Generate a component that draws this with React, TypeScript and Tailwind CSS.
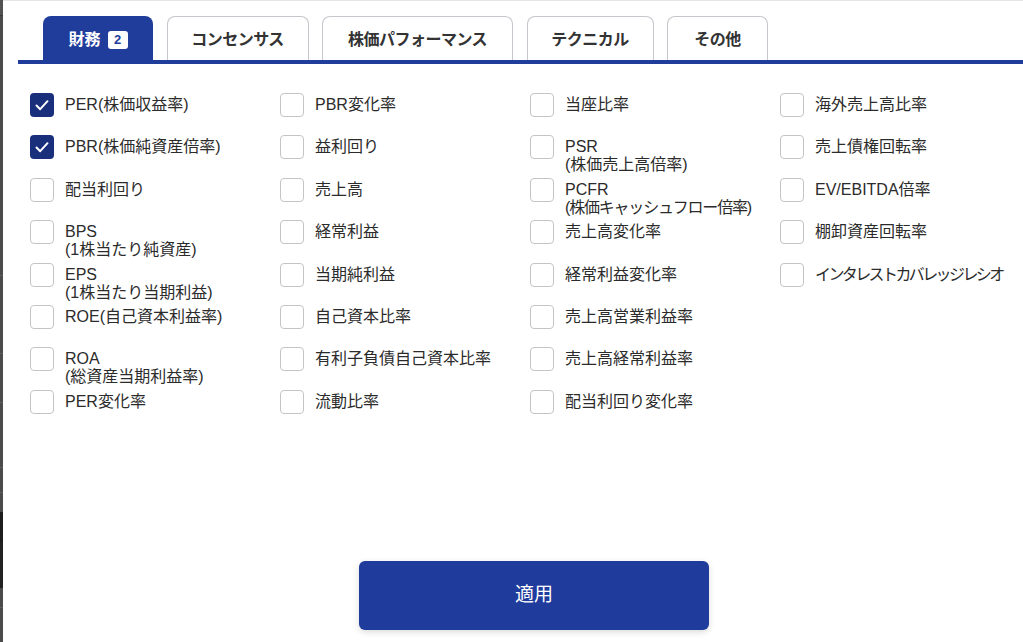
import React from "react";

const FONT = { fontFamily: '"Liberation Sans", "Noto Sans CJK JP", sans-serif' };

type Item = { label: string; sub?: string; checked?: boolean; lt?: string; st?: string };

const columns: Item[][] = [
  [
    { label: "PER(株価収益率)", checked: true },
    { label: "PBR(株価純資産倍率)", checked: true },
    { label: "配当利回り" },
    { label: "BPS", sub: "(1株当たり純資産)" },
    { label: "EPS", sub: "(1株当たり当期利益)" },
    { label: "ROE(自己資本利益率)" },
    { label: "ROA", sub: "(総資産当期利益率)" },
    { label: "PER変化率" },
  ],
  [
    { label: "PBR変化率" },
    { label: "益利回り" },
    { label: "売上高" },
    { label: "経常利益" },
    { label: "当期純利益" },
    { label: "自己資本比率" },
    { label: "有利子負債自己資本比率" },
    { label: "流動比率" },
  ],
  [
    { label: "当座比率" },
    { label: "PSR", sub: "(株価売上高倍率)" },
    { label: "PCFR", sub: "(株価キャッシュフロー倍率)", st: "tracking-[-1.2px]" },
    { label: "売上高変化率" },
    { label: "経常利益変化率" },
    { label: "売上高営業利益率" },
    { label: "売上高経常利益率" },
    { label: "配当利回り変化率" },
  ],
  [
    { label: "海外売上高比率" },
    { label: "売上債権回転率" },
    { label: "EV/EBITDA倍率" },
    { label: "棚卸資産回転率" },
    { label: "インタレストカバレッジレシオ", lt: "tracking-[-2.6px]" },
  ],
];

function Check({ checked }: { checked?: boolean }) {
  if (checked) {
    return (
      <div className="w-[24px] h-[24px] shrink-0 rounded-[4px] bg-[#1a2f7c] flex items-center justify-center">
        <svg width="24" height="24" viewBox="0 0 24 24">
          <polyline points="6.5,12.5 10.2,16.2 17.5,8.2" fill="none" stroke="#fff" strokeWidth="2" strokeLinecap="round" strokeLinejoin="round" />
        </svg>
      </div>
    );
  }
  return <div className="w-[24px] h-[24px] shrink-0 rounded-[4px] border border-[#c4c4c8] bg-white" />;
}

function Tab({ w, children, active }: { w: string; children: React.ReactNode; active?: boolean }) {
  return (
    <div
      className={
        active
          ? `${w} shrink-0 h-[44px] rounded-t-[8px] bg-[#203d9b] text-white flex items-center justify-center pt-[3px] text-[16px] font-bold`
          : `${w} shrink-0 h-[44px] rounded-t-[8px] border border-b-0 border-[#c6c6cc] bg-white text-[#333] flex items-center justify-center pt-[3px] text-[16px] font-bold tracking-[-0.5px]`
      }
    >
      {children}
    </div>
  );
}

export default function App() {
  return (
    <div className="w-[1023px] h-[642px] flex bg-white overflow-hidden" style={FONT}>
      <div className="w-[3px] shrink-0 h-full flex flex-col bg-[#4b4b4b]">
        <div className="h-[15px] bg-[#525252]" />
        <div className="h-[1px] bg-[#3a3a3a]" />
        <div className="h-[259px]" />
        <div className="h-[1px] bg-[#5e5e5e]" />
        <div className="h-[77px]" />
        <div className="h-[1px] bg-[#5e5e5e]" />
        <div className="h-[48px]" />
        <div className="h-[1px] bg-[#5e5e5e]" />
        <div className="h-[64px]" />
        <div className="h-[1px] bg-[#5e5e5e]" />
        <div className="h-[24px]" />
        <div className="h-[1px] bg-[#5e5e5e]" />
        <div className="h-[19px]" />
        <div className="h-[30px] bg-[#1d1d1d]" />
        <div className="h-[46px] bg-[#222]" />
        <div className="h-[19px]" />
        <div className="h-[1px] bg-[#5e5e5e]" />
      </div>
      <div className="flex-1 min-w-0 flex flex-col border-t border-[#e4e4e4]">
        <div className="pl-[15px]">
          <div className="flex items-end gap-[13.5px] pl-[25px] pt-[15px]">
            <Tab w="w-[110px]" active>
              <span>財務</span>
              <span className="ml-[7px] w-[20px] h-[18px] rounded-[3px] bg-white text-[#203d9b] text-[13px] font-bold flex items-center justify-center leading-none">
                2
              </span>
            </Tab>
            <Tab w="w-[142px]">コンセンサス</Tab>
            <Tab w="w-[191px]">株価パフォーマンス</Tab>
            <Tab w="w-[127px]">テクニカル</Tab>
            <Tab w="w-[101px]">その他</Tab>
          </div>
          <div className="h-[4px] bg-[#203d9b]" />
          <div className="flex pl-[12px] mt-[29px]">
            {columns.map((col, ci) => (
              <div key={ci} className="w-[250px] shrink-0 flex flex-col">
                {col.map((it, ii) => (
                  <div key={ii} className="h-[42.4px] flex items-start">
                    <Check checked={it.checked} />
                    <div className="ml-[11px] pt-[3px] text-[16px] leading-[18px] text-[#2b2b2b] whitespace-nowrap">
                      <div className={it.lt ?? ""}>{it.label}</div>
                      {it.sub && <div className={it.st ?? ""}>{it.sub}</div>}
                    </div>
                  </div>
                ))}
              </div>
            ))}
          </div>
        </div>
        <div className="mt-[129px] ml-[356px] w-[350px] h-[69px] rounded-[6px] bg-[#1f3c9c] shadow-[0_2px_6px_rgba(0,0,0,0.15)] flex items-center justify-center text-white text-[19px]">
          適用
        </div>
      </div>
    </div>
  );
}
